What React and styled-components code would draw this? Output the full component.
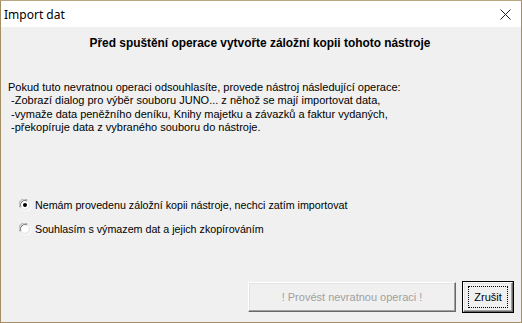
import React from 'react';
import styled, { createGlobalStyle } from 'styled-components';

const GlobalStyle = createGlobalStyle`
  html, body {
    margin: 0;
    padding: 0;
    background: #ffffff;
  }
`;

const uiFont = `"Liberation Sans", "DejaVu Sans", sans-serif`;

const RadioMark = ({ checked }) => (
  <RadioBox>
    <svg width="12" height="12" viewBox="0 0 12 12">
      <path d="M1.2 8.5 A5.2 5.2 0 0 1 8.5 1.2" fill="none" stroke="#a0a0a0" strokeWidth="1" />
      <path d="M2.2 8 A4.2 4.2 0 0 1 8 2.2" fill="none" stroke="#696969" strokeWidth="1" />
      <circle cx="6" cy="6" r="3.8" fill="#ffffff" />
      <path d="M10.8 3.5 A5.2 5.2 0 0 1 3.5 10.8" fill="none" stroke="#ffffff" strokeWidth="1" />
      <path d="M9.8 4 A4.2 4.2 0 0 1 4 9.8" fill="none" stroke="#e3e3e3" strokeWidth="1" />
      {checked && <circle cx="6" cy="6" r="2" fill="#000000" />}
    </svg>
  </RadioBox>
);

const App = () => (
  <>
    <GlobalStyle />
    <Window>
      <TitleBar>
        <Title>Import dat</Title>
        <CloseButton>
          <svg width="11" height="11" viewBox="0 0 11 11">
            <path d="M0.5 0.5 L10.5 10.5 M10.5 0.5 L0.5 10.5" stroke="#1a1a1a" strokeWidth="1" />
          </svg>
        </CloseButton>
      </TitleBar>

      <Body>
        <Heading>Před spuštění operace vytvořte záložní kopii tohoto nástroje</Heading>

        <Message>
{`Pokud tuto nevratnou operaci odsouhlasíte, provede nástroj následující operace:
 -Zobrazí dialog pro výběr souboru JUNO... z něhož se mají importovat data,
 -vymaže data peněžního deníku, Knihy majetku a závazků a faktur vydaných,
 -překopíruje data z vybraného souboru do nástroje.`}
        </Message>

        <Options>
          <Option>
            <RadioMark checked />
            <span>Nemám provedenu záložní kopii nástroje, nechci zatím importovat</span>
          </Option>
          <Option>
            <RadioMark />
            <span>Souhlasím s výmazem dat a jejich zkopírováním</span>
          </Option>
        </Options>

        <Buttons>
          <Button $width={208} disabled>! Provést nevratnou operaci !</Button>
          <Button $width={50} $default>
            <FocusRect>Zrušit</FocusRect>
          </Button>
        </Buttons>
      </Body>
    </Window>
  </>
);

const Window = styled.div`
  width: 522px;
  height: 323px;
  box-sizing: border-box;
  border: 1px solid #a38f63;
  border-top-color: #b8a67e;
  background: #f0f0f0;
  display: flex;
  flex-direction: column;
  font-family: ${uiFont};
  color: #000000;
`;

const TitleBar = styled.div`
  height: 26px;
  background: #ffffff;
  display: flex;
  align-items: center;
  justify-content: space-between;
  padding: 0 0 0 3px;
`;

const Title = styled.div`
  font-family: "Noto Sans", "Open Sans", sans-serif;
  font-size: 12px;
  color: #000000;
  margin-top: 1px;
`;

const CloseButton = styled.div`
  width: 30px;
  height: 26px;
  display: flex;
  align-items: center;
  justify-content: center;
  margin-right: 1px;
`;

const Body = styled.div`
  flex: 1;
  display: flex;
  flex-direction: column;
  padding: 9px 0 0 0;
`;

const Heading = styled.div`
  text-align: center;
  font-weight: bold;
  font-size: 11.9px;
  line-height: 14px;
  padding-right: 2px;
`;

const Message = styled.div`
  margin-top: 31px;
  padding-left: 7px;
  white-space: pre;
  font-size: 11px;
  line-height: 13.3px;
`;

const Options = styled.div`
  margin-top: 63px;
  padding-left: 17px;
  display: flex;
  flex-direction: column;
  gap: 8px;
`;

const Option = styled.div`
  display: flex;
  align-items: center;
  gap: 4px;
  height: 16px;
  font-size: 10.7px;
`;

const RadioBox = styled.span`
  width: 13px;
  height: 13px;
  display: flex;
  align-items: center;
  justify-content: center;
`;

const Buttons = styled.div`
  margin-top: 45px;
  display: flex;
  justify-content: flex-end;
  gap: 7px;
  padding-right: 8px;
`;

const Button = styled.button`
  width: ${p => p.$width}px;
  height: 30px;
  box-sizing: border-box;
  padding: 0;
  font-family: ${uiFont};
  font-size: 11px;
  background: #f0f0f0;
  color: #000000;
  display: flex;
  align-items: center;
  justify-content: center;
  border-style: solid;
  border-width: 1px;
  border-color: #ffffff #696969 #696969 #ffffff;
  box-shadow: inset -1px -1px 0 #a0a0a0, inset 1px 1px 0 #e3e3e3;
  outline: ${p => (p.$default ? '1px solid #000000' : 'none')};
  outline-offset: 0;

  &:disabled {
    color: #a0a0a0;
    text-shadow: none;
  }
`;

const FocusRect = styled.span`
  display: flex;
  align-items: center;
  justify-content: center;
  width: 38px;
  height: 20px;
  border: 1px dotted #000000;
`;

export default App;
